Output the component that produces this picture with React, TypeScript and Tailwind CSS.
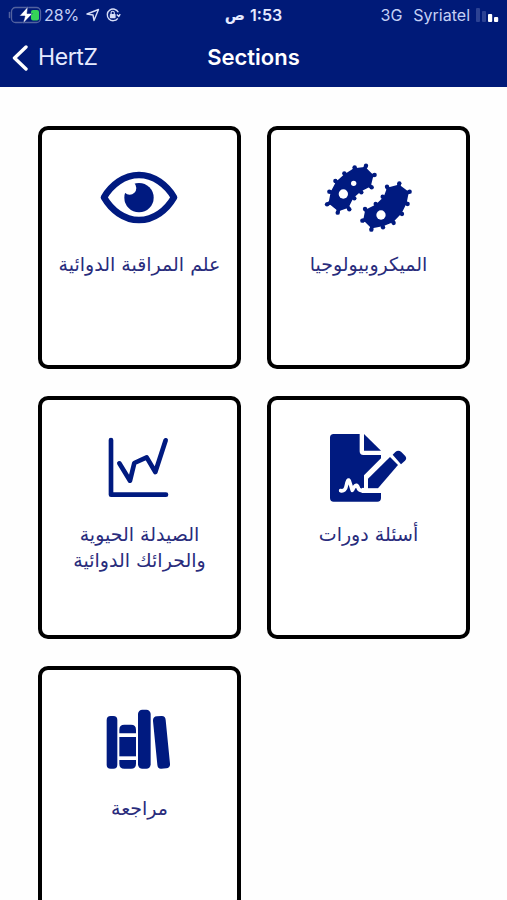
import React from "react";

type Section = {
    title: string;
    icon: React.ReactNode;
    width: number;
    labelClass?: string;
};

// Each entry is [knob x, knob y, body x, body y]
const MICROBE_A = [
    [104, 37, 103, 45], [138, 32, 134, 41], [164, 60, 155, 62], [155, 97, 148, 91],
    [124, 112, 120, 105], [103, 130, 96, 126], [88, 163, 82, 154], [53, 173, 56, 163],
    [21, 148, 31, 143], [28, 110, 37, 112], [46, 78, 52, 83], [73, 55, 77, 61],
];

const MICROBE_B = [
    [201, 95, 205, 102], [238, 85, 236, 94], [269, 110, 261, 113], [263, 147, 255, 143],
    [246, 177, 240, 173], [221, 204, 217, 197], [189, 217, 187, 209], [154, 224, 156, 215],
    [127, 197, 135, 194], [135, 162, 140, 168], [167, 147, 170, 153], [188, 125, 195, 129],
];

const IconBox = ({ children }: { children: React.ReactNode }) => (
    <svg viewBox="0 0 300 255" className="w-[100px] h-[85px] shrink-0 text-[#001a80]" fill="currentColor">
        {children}
    </svg>
);

const Microbe = ({ points }: { points: number[][] }) => (
    <g stroke="currentColor" strokeLinejoin="round">
        <polygon points={points.map(([, , bx, by]) => `${bx},${by}`).join(" ")} strokeWidth="10" />
        {points.map(([x, y, bx, by]) => (
            <g key={x}>
                <circle cx={x} cy={y} r="6.5" stroke="none" />
                <path d={`M${x} ${y}L${bx} ${by}`} strokeWidth="11" />
            </g>
        ))}
    </g>
);

const EyeIcon = () => (
    <IconBox>
        <path
            d="M42 127C64 90 102 60 147 60s83 30 105 67c-22 38-60 68-105 68S64 165 42 127Z"
            fill="none"
            stroke="currentColor"
            strokeWidth="20"
            strokeLinejoin="round"
        />
        <circle cx="147" cy="128" r="44" />
        <circle cx="119" cy="99" r="20" fill="white" />
    </IconBox>
);

const MicrobesIcon = () => (
    <IconBox>
        <g transform="translate(3 0)">
            <Microbe points={MICROBE_A} />
            <Microbe points={MICROBE_B} />
            <circle cx="70" cy="117" r="14" fill="white" />
            <circle cx="101" cy="85" r="8" fill="white" />
            <circle cx="183" cy="180" r="14" fill="white" />
        </g>
    </IconBox>
);

const ChartIcon = () => (
    <IconBox>
        <g transform="translate(-3 0)" fill="none" stroke="currentColor" strokeWidth="14" strokeLinecap="round" strokeLinejoin="round">
            <path d="M66 45V209H231" />
            <path d="M91 115L123 167 136 114 173 97 199 141 230 46" />
        </g>
    </IconBox>
);

const SignedFileIcon = () => (
    <IconBox>
        <g transform="translate(3 0)">
            <path d="M41 27H119V79Q119 90 130 90H183V100L132 151V189Q128 187 125 190V204H183V219Q183 230 172 230H41Q30 230 30 219V38Q30 27 41 27Z" />
            <path d="M132 27L183 77H132Z" />
            <path d="M144 161L210 96 234 120 174 190H144Z" />
            <path d="M218 89L226 81Q235 73 244 81L255 92Q262 100 255 107L243 118Z" />
            <path
                d="M62 197Q76 200 79 182Q84 158 88 168L97 196Q107 174 113 184Q115 197 126 197H180"
                fill="none"
                stroke="white"
                strokeWidth="11"
                strokeLinecap="round"
                strokeLinejoin="round"
            />
        </g>
    </IconBox>
);

const BooksIcon = () => (
    <IconBox>
        <g transform="translate(-4 0)">
            <rect x="54" y="63" width="32" height="158" rx="12" />
            <path d="M92 115V104Q92 89 107 89H127Q142 89 142 104V115Z" />
            <path d="M92 126H142V184H92Z" />
            <path d="M92 195H142V206Q142 221 127 221H107Q92 221 92 206Z" />
            <rect x="148" y="44" width="38" height="177" rx="13" />
            <path d="M205 64L218 63Q230 62 231 75L244 206Q245 219 233 220L218 221Q207 222 206 209L193 78Q192 65 205 64Z" />
        </g>
    </IconBox>
);

const SECTIONS: Section[] = [
    { title: "علم المراقبة الدوائية", icon: <EyeIcon />, width: 161 },
    { title: "الميكروبيولوجيا", icon: <MicrobesIcon />, width: 120 },
    { title: "الصيدلة الحيوية والحرائك الدوائية", icon: <ChartIcon />, width: 136 },
    { title: "أسئلة دورات", icon: <SignedFileIcon />, width: 96 },
    { title: "مراجعة", icon: <BooksIcon />, width: 56, labelClass: "mt-[15px]" },
];

const StatusBar = () => (
    <div className="grid grid-cols-[1fr_auto_1fr] items-center h-[30px] pl-2 pr-[8px] text-[16px] text-[#c5d0f5]">
        <div className="flex items-center">
            <svg viewBox="0 0 34 18" className="w-[34px] h-[18px]">
                <rect x="3.5" y="1.5" width="29" height="15" rx="4" fill="none" stroke="#52629f" strokeWidth="1.3" />
                <path d="M1.5 6.5V11.5" stroke="#52629f" strokeWidth="1.5" strokeLinecap="round" />
                <rect x="23" y="4" width="8" height="10.5" rx="2" fill="#35d458" />
                <path d="M20 0.500L11.500 10H17L15 17.500L24.500 7.500H19Z" fill="white" stroke="#001a78" strokeWidth="0.5" />
            </svg>
            <span className="ml-[2px] w-[35px] tracking-[-0.1px] whitespace-nowrap">28%</span>
            <svg viewBox="0 0 14 14" className="ml-[7px] w-[14px] h-[14px]" fill="none" stroke="#d7def8" strokeWidth="1.4" strokeLinejoin="round">
                <path d="M1 6L12.500 1.500 8 12.500 7 7Z" />
            </svg>
            <svg viewBox="0 0 16 16" className="ml-[5px] w-[16px] h-[16px]" fill="none" stroke="#d7def8" strokeWidth="1.4">
                <path d="M13.300 5.300A5.800 5.800 0 1 0 12.800 11.300M11.800 7.500l2 2 1.400-2.300" />
                <rect x="4.800" y="7" width="5.800" height="4.200" rx="0.700" fill="#d7def8" stroke="none" />
                <path d="M6.100 7V5.800a1.600 1.600 0 0 1 3.200 0V7" strokeWidth="1.100" />
            </svg>
        </div>
        <div className="flex items-center gap-[5px] font-semibold text-[#e5eaff]" dir="ltr">
            <span className="font-['DejaVu_Sans',sans-serif] text-[15px]">ص</span>
            <span>1:53</span>
        </div>
        <div className="flex items-center justify-end">
            <span>3G</span>
            <span className="ml-[11px]">Syriatel</span>
            <svg viewBox="0 0 23 15" className="ml-[6px] w-[23px] h-[15px]">
                <rect x="0" y="0" width="4" height="14" rx="1" fill="#2c4293" />
                <rect x="6" y="3" width="4" height="11" rx="1" fill="#2c4293" />
                <rect x="12" y="6" width="4.200" height="8" rx="1" fill="white" />
                <rect x="18" y="9" width="4.200" height="5" rx="1" fill="white" />
            </svg>
        </div>
    </div>
);

const NavBar = () => (
    <div className="grid grid-cols-[1fr_auto_1fr] items-center h-[55px] pl-3 pr-3 text-[#e5eaff]">
        <div className="flex items-center gap-[10px]">
            <svg viewBox="0 0 16 26" className="w-4 h-[26px]" fill="none" stroke="white" strokeWidth="3.400" strokeLinecap="round" strokeLinejoin="round">
                <path d="M14 2L2.500 13 14 24" />
            </svg>
            <span className="text-[23px] tracking-[-0.4px]">HertZ</span>
        </div>
        <h1 className="text-[22px] font-semibold text-white">Sections</h1>
        <div />
    </div>
);

const SectionCard = ({ section }: { section: Section }) => (
    <div className="flex flex-col items-center h-[243px] pt-[25px] border-4 border-black rounded-[10px] bg-white">
        {section.icon}
        <p
            dir="rtl"
            className={`${section.labelClass ?? "mt-[11px]"} text-center text-[19px] leading-[26px] text-[#292c7c] font-['DejaVu_Sans',sans-serif]`}
            style={{ width: section.width + 12 }}
        >
            {section.title}
        </p>
    </div>
);

const App: React.FC = () => {
    return (
        <div className="w-full h-[900px] overflow-hidden bg-[#fefefe] font-['Inter',sans-serif]">
            <header className="h-[87px] bg-[#001a78]">
                <StatusBar />
                <NavBar />
            </header>

            <main className="grid grid-cols-[203px_203px] gap-x-[26px] gap-y-[27px] pl-[38px] pt-[39px]">
                {SECTIONS.map((section) => (
                    <SectionCard key={section.title} section={section} />
                ))}
            </main>
        </div>
    );
};

export default App;
